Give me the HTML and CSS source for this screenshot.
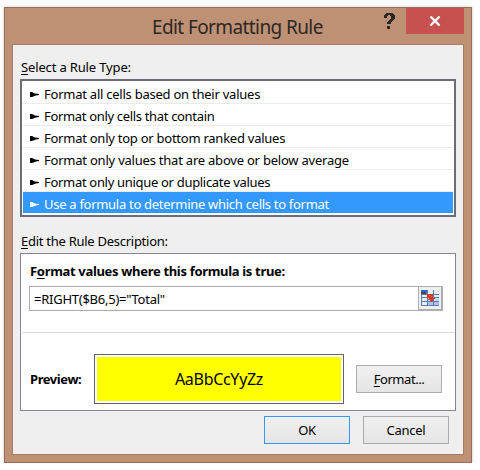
FILE: index.html
```html
<!DOCTYPE html>
<html lang="en">
<head>
<meta charset="utf-8">
<title>Edit Formatting Rule</title>
<link rel="stylesheet" href="styles.css">
</head>
<body>
<div class="window">
  <header class="titlebar">
    <h1 class="title"><span>Edit Formatting Rule</span></h1>
    <svg class="help" width="11" height="16" viewBox="0 0 11 16" shape-rendering="crispEdges"><path fill="#2b2725" d="M2 0h7v1h1v1h1v4h-1v1h-1v1H8v1H7v2H3V9h1V8h1V7h1V6h1V3H6V2H4v1H3v2H0V2h1V1h1zM3 13h3v3H3z"/></svg>
    <div class="close"><svg width="12" height="10" viewBox="0 0 12 10"><path d="M1.500 .5l9 9M10.500 .5l-9 9" stroke="#fff" stroke-width="2.300"/></svg></div>
  </header>
  <main class="content">
    <div class="label label-type"><u>S</u>elect a Rule Type:</div>
    <ul class="rules">
      <li class="rule"><i class="arrow"></i><span class="w1">Format all cells based on their values</span></li>
      <li class="rule"><i class="arrow"></i><span class="w2">Format only cells that contain</span></li>
      <li class="rule"><i class="arrow"></i><span class="w3">Format only top or bottom ranked values</span></li>
      <li class="rule"><i class="arrow"></i><span class="w4">Format only values that are above or below average</span></li>
      <li class="rule"><i class="arrow"></i><span class="w5">Format only unique or duplicate values</span></li>
      <li class="rule selected"><i class="arrow"></i><span class="w6">Use a formula to determine which cells to format</span></li>
    </ul>
    <div class="label label-desc"><u>E</u>dit the Rule Description:</div>
    <section class="description">
      <div class="heading">F<u>o</u>rmat values where this formula is true:</div>
      <div class="formula">
        <span class="formula-text">=RIGHT($B6,5)="Total"</span>
        <div class="picker">
          <svg width="18" height="16" viewBox="0 0 18 16" shape-rendering="crispEdges">
            <path fill="#5b7da8" d="M0 0h18v16H0z"/>
            <path fill="#e4edf7" d="M7 0h5v4H7zM13 0h5v4h-5zM1 5h5v2H1zM1 8h5v3H1zM1 12h5v3H1zM13 5h5v2h-5z"/>
            <path fill="#c9d9f3" d="M7 5h5v2H7zM7 8h5v3H7zM13 8h5v3h-5z"/>
            <path fill="#a9c2f0" d="M7 12h5v3H7zM13 12h5v3h-5z"/>
            <path fill="#2868cb" d="M0 0h6v2H0z"/><path fill="#39485c" d="M0 2h5v2H0z"/>
            <path fill="#d63c20" d="M6 4h6v4h2v1h-1v1h-1v1h-1v1h-1v-1H9v-1H7V9h1V8H6z"/>
            <path fill="#f07755" d="M8 5h1v1H8zM10 6h1v1h-1z"/>
          </svg>
        </div>
      </div>
      <hr class="divider">
      <div class="preview-row">
        <span class="preview-label">Preview:</span>
        <div class="preview"><div class="swatch"><span>AaBbCcYyZz</span></div></div>
        <button class="btn format"><u>F</u>ormat...</button>
      </div>
    </section>
    <footer class="actions">
      <button class="btn primary">OK</button>
      <button class="btn">Cancel</button>
    </footer>
  </main>
</div>
</body>
</html>
```
FILE: styles.css
```css
* { box-sizing: border-box; }
body { margin: 0; background: #fff; overflow: hidden; font: 13px/16px "Noto Sans", sans-serif; color: #000; }
u { text-decoration: underline; text-underline-offset: 2px; text-decoration-thickness: 1px; text-decoration-skip-ink: none; }
.window { width: 468px; height: 456px; margin: 7px 0 0 4px; padding: 0 7px 7px; border: 1px solid #976e55; background: #be9175; box-shadow: 0 0 3px rgba(0,0,0,.22); }
.titlebar { display: flex; height: 36px; align-items: flex-start; }
.title { flex: 1; margin: 0; padding: 5px 0 0 140px; font-size: 19px; line-height: 28px; font-weight: 400; color: #2b2725; white-space: nowrap; letter-spacing: -.6px; }
.help { margin: 5px 11px 0 0; flex: none; }
.close { width: 58px; height: 26px; background: #c75050; display: flex; align-items: center; justify-content: center; flex: none; }
.close svg { margin-left: -1px; }
.content { height: 411px; border: 1px solid #a67c62; background: #efefef; padding: 0 7px; }
.label { padding-left: 1px; white-space: nowrap; }
.label-type { height: 34px; padding-top: 14px; letter-spacing: -.15px; }
.rules { height: 138px; margin: 0; padding: 2px 1px; list-style: none; border: 2px solid #6c6d74; background: #fff; }
.rule { height: 22px; display: flex; align-items: flex-start; padding: 4px 0 0 7px; border-bottom: 1px solid #ececec; white-space: nowrap; }
.rule:first-child { height: 21px; padding-top: 3px; }
.rule.selected { height: 21px; background: #3399ff; color: #fff; border: 0; }
.w1 { letter-spacing: -.24px; }
.w2 { letter-spacing: -.33px; }
.w3 { letter-spacing: -.25px; }
.w4 { letter-spacing: -.22px; }
.w5 { letter-spacing: -.31px; }
.w6 { letter-spacing: -.29px; }
.arrow { width: 9px; height: 5px; margin: 6px 5px 0 0; background: currentColor; clip-path: polygon(0 0, 2px 0, 5px 1.500px, 9px 2px, 9px 3px, 6px 3.500px, 2px 5px, 0 5px); }
.label-desc { height: 36px; padding-top: 16px; letter-spacing: -.27px; }
.description { height: 158px; border: 1px solid #828790; background: #fff; padding: 0 1px; }
.heading { height: 32px; padding: 9px 0 0 8px; font-weight: 700; letter-spacing: -.32px; white-space: nowrap; }
.formula { display: flex; width: 414px; height: 25px; margin-left: 7px; border: 1px solid #abadb3; }
.formula-text { flex: 1; padding: 4px 0 0 4px; white-space: nowrap; letter-spacing: -.25px; }
.picker { width: 25px; height: 25px; margin: -1px -1px 0 0; border: 1px solid #abadb3; border-width: 1px 2px 2px 1px; background: #efefef; padding: 3px 2px; line-height: 0; }
.divider { height: 1px; margin: 21px 0; border: 0; background: #dcdcdc; }
.preview-row { display: flex; align-items: center; height: 50px; margin-left: 8px; }
.preview-label { width: 64px; font-weight: 700; white-space: nowrap; letter-spacing: -.42px; }
.preview { width: 250px; height: 50px; padding: 2px; border: 1px solid #626262; margin-right: 12px; }
.swatch { height: 44px; background: #ff0; display: flex; align-items: center; justify-content: center; font: 16px "Noto Sans", sans-serif; letter-spacing: -.3px; }
.btn { width: 86px; height: 28px; padding: 0; border: 1px solid #acacac; background: linear-gradient(#f0f0f0, #e5e5e5); font: inherit; letter-spacing: -.25px; color: #000; }
.format { letter-spacing: -.45px; }
.primary { border-color: #3399ff; }
.actions { display: flex; justify-content: flex-end; gap: 13px; padding: 5px 7px 0 0; }
```
